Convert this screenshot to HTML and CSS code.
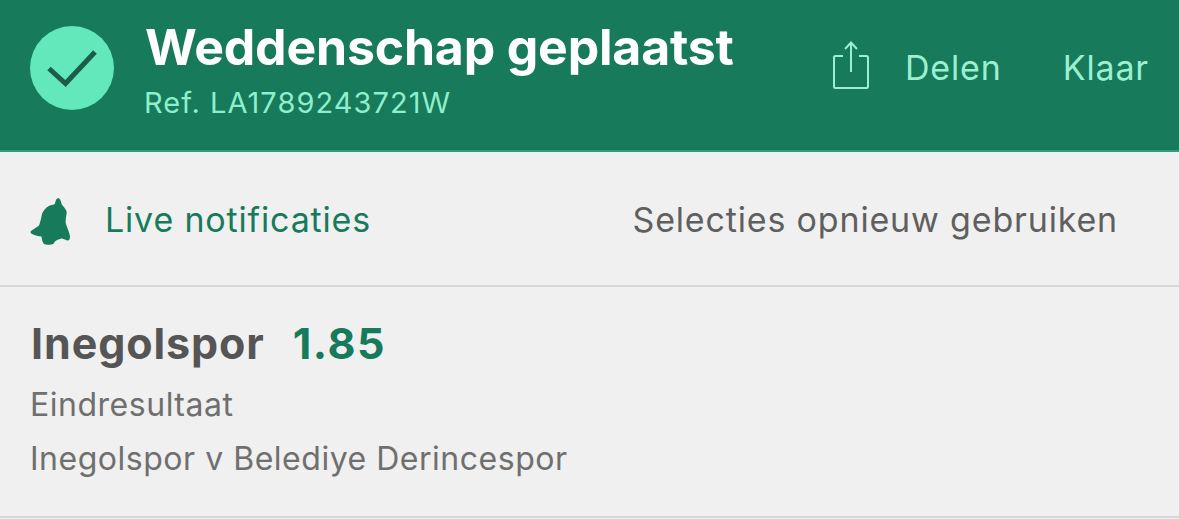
FILE: index.html
```html
<!DOCTYPE html>
<html lang="nl">
<head>
<meta charset="utf-8">
<title>Weddenschap geplaatst</title>
<link rel="stylesheet" href="styles.css">
</head>
<body>
<header class="header">
  <div class="badge">
    <svg class="check" width="50" height="40" viewBox="0 0 50 40"><path d="M2 20.500L18.500 35.500L48 4" fill="none" stroke="#1c5c4a" stroke-width="5"/></svg>
  </div>
  <div class="heading">
    <div class="title">Weddenschap geplaatst</div>
    <div class="ref">Ref. LA1789243721W</div>
  </div>
  <div class="actions">
    <svg class="share" width="38" height="50" viewBox="0 0 38 50"><path d="M11 16H3.500Q2 16 2 17.500V46.500Q2 48 3.500 48H34.500Q36 48 36 46.500V17.500Q36 16 34.500 16H27M19 32V3M13 9L19 2.500L25 9" fill="none" stroke="#9af0d0" stroke-width="2"/></svg>
    <span class="action delen">Delen</span>
    <span class="action">Klaar</span>
  </div>
</header>
<section class="tools">
  <svg class="bell" width="44" height="50" viewBox="0 0 44 50"><path d="M29.300 3C31 3.500 32 6 32.700 9.500C36 13 38 16 37.700 18C37 22 36.500 25 36.700 28C38 33 40.500 37 41 41.500C41 44.500 40 46 38 45.500C36 44.500 34 43.500 32.700 43.500C30 44 27.500 45 26 46.500C25 47.500 25 48.500 24.300 49C22 50 17 50 15 49C13 47 13 44 12.500 41.500C10 41.500 6 40.500 3 39C1.500 38 1 37 2 36C5 34 8 32 10 30.500C11.500 27 12 23 13 19C14.500 15 18 11.500 21 10.500C23 10 25.500 9.500 26 8.500C26.500 6 27 3.500 29.300 3Z" fill="#177a5b"/></svg>
  <span class="live">Live notificaties</span>
  <span class="reuse">Selecties opnieuw gebruiken</span>
</section>
<section class="bet">
  <div class="pick"><span class="team">Inegolspor</span><span class="odds">1.85</span></div>
  <div class="meta market">Eindresultaat</div>
  <div class="meta">Inegolspor v Belediye Derincespor</div>
</section>
</body>
</html>
```
FILE: styles.css
```css
* { box-sizing: border-box; }
html, body { margin: 0; padding: 0; }
body {
  width: 1179px;
  height: 519px;
  overflow: hidden;
  background: #f0f0f0;
  font-family: Inter, "Liberation Sans", sans-serif;
}
.header {
  height: 152px;
  background: #167a5b;
  border-bottom: 2px solid #2f9d7b;
  display: flex;
  align-items: flex-start;
  padding: 26px 30px 0 30px;
}
.badge {
  width: 84px;
  height: 84px;
  border-radius: 50%;
  background: #62e8bb;
  display: flex;
  align-items: center;
  justify-content: center;
  flex: none;
}
.heading { margin-left: 32px; margin-top: -7px; }
.title {
  font-size: 50px;
  line-height: 56px;
  font-weight: 700;
  letter-spacing: -0.2px;
  color: #fff;
  white-space: nowrap;
  margin-left: -1px;
}
.ref {
  margin-top: 11px;
  font-size: 29px;
  line-height: 34px;
  letter-spacing: 1.05px;
  color: #8feecb;
  white-space: nowrap;
  margin-left: -2px;
}
.actions {
  margin-left: auto;
  display: flex;
  align-items: center;
  margin-top: 14px;
  color: #9af0d0;
}
.share { margin-right: 35px; margin-bottom: 6px; }
.action { font-size: 34px; line-height: 54px; letter-spacing: 0.85px; }
.delen { margin-right: 61px; }
.tools {
  height: 135px;
  border-bottom: 2px solid #d6d6d6;
  display: flex;
  align-items: center;
  padding: 2px 61px 0 29px;
  font-size: 34px;
  letter-spacing: 0.83px;
}
.bell { flex: none; }
.live { margin-left: 32px; color: #177a5b; }
.reuse { margin-left: auto; color: #5f5f5f; }
.bet {
  height: 231px;
  border-bottom: 2px solid #d6d6d6;
  padding: 28px 31px 0;
}
.pick { display: flex; align-items: baseline; height: 56px; line-height: 56px; font-size: 43px; font-weight: 700; letter-spacing: 0.9px; }
.team { color: #555; }
.odds { color: #177a5b; margin-left: 28px; letter-spacing: 1.5px; }
.meta { font-size: 32px; line-height: 40px; letter-spacing: 0.52px; color: #6f6f6f; margin-top: 14px; white-space: nowrap; margin-left: -1px; }
```
